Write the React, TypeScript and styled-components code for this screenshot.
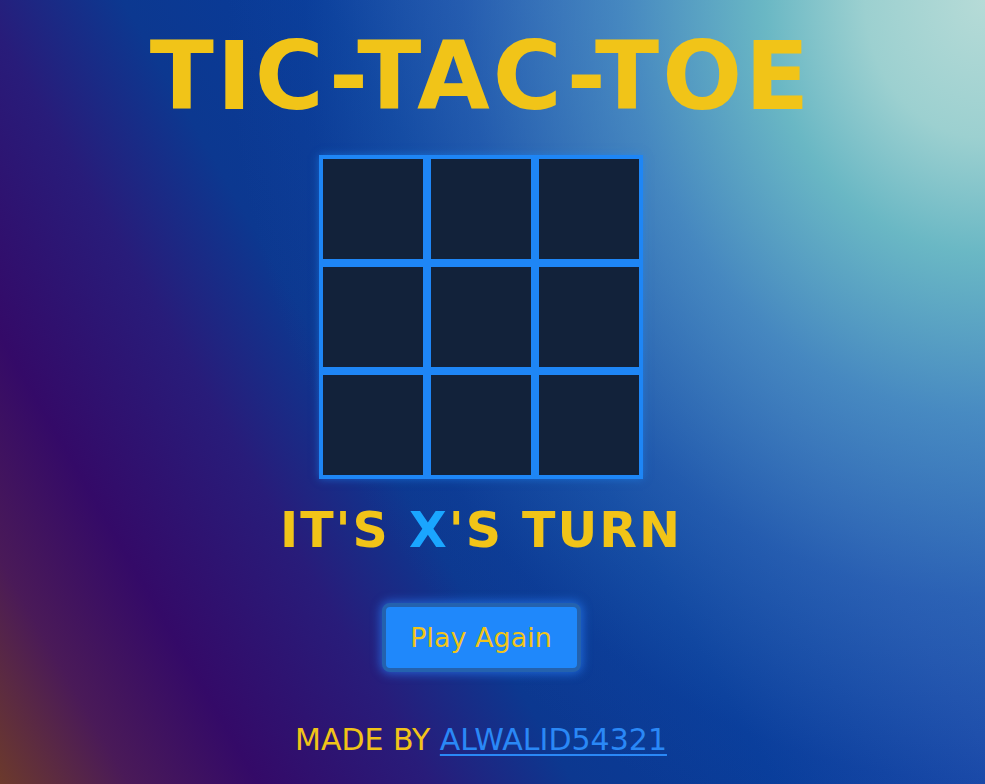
import React from "react";
import styled, { createGlobalStyle } from "styled-components";

const GlobalStyle = createGlobalStyle`
  html, body {
    margin: 0;
    padding: 0;
    height: 100%;
  }
  body {
    font-family: "Comic Sans MS", "DejaVu Sans", sans-serif;
  }
  * { box-sizing: border-box; }
`;

const Page = styled.main`
  min-height: 100vh;
  display: flex;
  flex-direction: column;
  align-items: center;
  padding: 30px 23px 0 0;
  background:
    radial-gradient(
      1000px 1150px at 100% 0%,
      #b6dbd7 0%,
      #9cd0d0 12%,
      rgba(112, 192, 198, 0.92) 22%,
      rgba(92, 168, 204, 0.66) 36%,
      rgba(70, 138, 200, 0.36) 52%,
      rgba(50, 110, 190, 0.06) 68%,
      rgba(50, 110, 190, 0) 76%
    ),
    linear-gradient(
      60deg,
      #6c3a2c 0%,
      #4a1a58 9%,
      #340a68 18%,
      #281c7a 30%,
      #0c3890 40%,
      #083c9a 54%,
      #1a48a8 70%,
      #2a60b8 100%
    );
  font-family: "Comic Sans MS", "DejaVu Sans", sans-serif;
`;

const Title = styled.h1`
  margin: 0;
  font-size: 94px;
  line-height: 1;
  font-weight: 700;
  color: #f1c418;
  letter-spacing: 3px;
`;

const Board = styled.div`
  margin-top: 31px;
  display: grid;
  grid-template-columns: repeat(3, 108px);
  grid-template-rows: repeat(3, 108px);
  box-shadow: 0 0 8px rgba(30, 134, 246, 0.55);
`;

const Cell = styled.button`
  margin: 0;
  padding: 0;
  background: #12223a;
  border: 4px solid #1e86f6;
  cursor: pointer;
`;

const Status = styled.h2`
  margin: 27px 0 0;
  font-size: 49px;
  line-height: 1;
  font-weight: 700;
  color: #f1c418;
  letter-spacing: 2px;
`;

const Player = styled.span<{ $color: string }>`
  color: ${(p) => p.$color};
`;

const PlayButton = styled.button`
  margin-top: 48px;
  width: 199px;
  height: 69px;
  border: 4px solid #2462ae;
  border-radius: 8px;
  background: #1f88fb;
  color: #f1c418;
  font-family: "Comic Sans MS", "DejaVu Sans", sans-serif;
  font-size: 27px;
  line-height: 1;
  padding: 0;
  box-shadow: 0 0 10px 2px rgba(40, 130, 255, 0.6);
  cursor: pointer;
`;

const Footer = styled.p`
  margin: 53px 0 0;
  font-size: 30px;
  line-height: 1;
  color: #f1c418;
`;

const Link = styled.a`
  color: #2a88f6;
  text-decoration: underline;
  text-decoration-thickness: 2px;
  text-underline-offset: 4px;
`;

export default function App() {
  const cells = Array.from({ length: 9 }, (_, i) => i);
  return (
    <>
      <GlobalStyle />
      <Page>
        <Title>TIC-TAC-TOE</Title>
        <Board>
          {cells.map((i) => (
            <Cell key={i} aria-label={`cell ${i + 1}`} />
          ))}
        </Board>
        <Status>
          IT'S <Player $color="#1aa6ff">X</Player>'S TURN
        </Status>
        <PlayButton>Play Again</PlayButton>
        <Footer>
          MADE BY <Link href="#">ALWALID54321</Link>
        </Footer>
      </Page>
    </>
  );
}
